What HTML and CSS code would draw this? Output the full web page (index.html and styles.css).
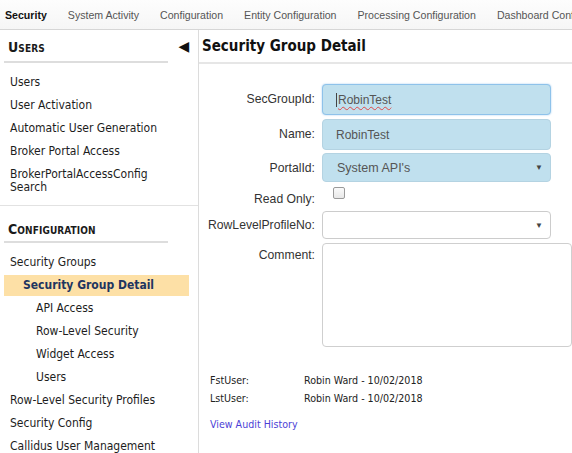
FILE: index.html
```html
<!DOCTYPE html>
<html>
<head>
<meta charset="utf-8">
<link rel="stylesheet" href="styles.css">
</head>
<body>
<nav class="topnav">
  <a class="tab active">Security</a>
  <a class="tab">System Activity</a>
  <a class="tab">Configuration</a>
  <a class="tab">Entity Configuration</a>
  <a class="tab">Processing Configuration</a>
  <a class="tab">Dashboard Configuration</a>
</nav>
<div class="layout">
  <aside class="sidebar">
    <span class="collapse">&#9664;</span>
    <section class="group">
      <h2 class="group-title">Users</h2>
      <ul class="menu">
        <li>Users</li>
        <li>User Activation</li>
        <li>Automatic User Generation</li>
        <li>Broker Portal Access</li>
        <li class="wrap">BrokerPortalAccessConfig<br>Search</li>
      </ul>
    </section>
    <section class="group last">
      <h2 class="group-title">Configuration</h2>
      <ul class="menu">
        <li>Security Groups</li>
        <li class="current">Security Group Detail</li>
        <li class="sub">API Access</li>
        <li class="sub">Row-Level Security</li>
        <li class="sub">Widget Access</li>
        <li class="sub">Users</li>
        <li>Row-Level Security Profiles</li>
        <li>Security Config</li>
        <li>Callidus User Management</li>
      </ul>
    </section>
  </aside>
  <main class="main">
    <h1 class="page-title">Security Group Detail</h1>
    <form class="form">
      <div class="row">
        <label class="label">SecGroupId:</label>
        <div class="field focus"><span class="caret-line"></span><span class="spell">RobinTest</span></div>
      </div>
      <div class="row tight">
        <label class="label">Name:</label>
        <input class="field" value="RobinTest">
      </div>
      <div class="row">
        <label class="label">PortalId:</label>
        <div class="field select"><span>System API's</span><span class="caret">&#9660;</span></div>
      </div>
      <div class="row check-row">
        <label class="label">Read Only:</label>
        <span class="checkbox"></span>
      </div>
      <div class="row select-row">
        <label class="label">RowLevelProfileNo:</label>
        <div class="field select plain"><span></span><span class="caret">&#9660;</span></div>
      </div>
      <div class="row">
        <label class="label">Comment:</label>
        <div class="textarea"></div>
      </div>
    </form>
    <div class="audit">
      <div class="audit-row"><span class="audit-key">FstUser:</span><span>Robin Ward - 10/02/2018</span></div>
      <div class="audit-row"><span class="audit-key">LstUser:</span><span>Robin Ward - 10/02/2018</span></div>
      <a class="audit-link">View Audit History</a>
    </div>
  </main>
</div>
</body>
</html>
```

FILE: styles.css
```css
* { box-sizing: border-box; }
html, body { margin: 0; padding: 0; background: #fff; overflow: hidden; }
body { width: 572px; height: 453px; font-family: "Liberation Sans", Arial, sans-serif; color: #222; }

.topnav {
  display: flex;
  height: 30px;
  align-items: center;
  border-bottom: 1px solid #d6d6d6;
  background: linear-gradient(#fdfdfd, #f6f6f6);
  white-space: nowrap;
  overflow: hidden;
  font-size: 10.6px;
  padding-left: 5px;
}
.tab { color: #555; margin-right: 21px; }
.tab.active { color: #111; font-weight: bold; }

.layout { display: flex; height: 423px; }

.sidebar {
  position: relative;
  width: 199px;
  flex: none;
  border-right: 1px solid #dcdcdc;
  font-family: "DejaVu Sans Condensed", "DejaVu Sans", sans-serif;
  font-size: 12px;
  color: #1d1d1d;
}
.collapse {
  position: absolute;
  left: 179px;
  top: 8px;
  font-size: 14px;
  color: #111;
  transform: scaleX(1.1);
}
.group { border-bottom: 1px solid #e2e2e2; padding-bottom: 6px; }
.group.last { border-bottom: none; }
.group-title {
  margin: 0 30px 0 4px;
  padding: 9px 4px 5px;
  border-bottom: 2px solid #dddddd;
  font-size: 14px;
  font-weight: bold;
  font-variant: small-caps;
  color: #1a1a1a;
  line-height: 17px;
  letter-spacing: 0.1px;
}
.group.last .group-title { padding-top: 15px; padding-bottom: 3px; }
.menu { list-style: none; margin: 0; padding: 8px 0 0; }
.menu li { padding: 0 0 0 10px; height: 23px; line-height: 23px; white-space: nowrap; }
.menu li.wrap { height: auto; line-height: 13px; padding-top: 5px; padding-bottom: 5px; }
.menu li.current {
  background: #fde0a6;
  margin: 1px 9px 1px 4px;
  padding-left: 19px;
  height: 21px;
  line-height: 21px;
  font-weight: bold;
  color: #1e3560;
}
.menu li.sub { padding-left: 36px; }
.group.last .menu { padding-top: 8px; }

.main { flex: 1; min-width: 0; position: relative; }
.page-title {
  margin: 0;
  padding: 7px 0 6px 3px;
  font-family: "DejaVu Sans Condensed", "DejaVu Sans", sans-serif;
  font-size: 15px;
  font-weight: bold;
  line-height: 19px;
  color: #111;
  border-bottom: 2px solid #e6e6e6;
}

.form { padding-top: 20px; }
.row { display: flex; align-items: flex-start; margin-bottom: 4px; }
.row.tight { margin-bottom: 3px; }
.label {
  width: 117px;
  flex: none;
  text-align: right;
  padding-right: 1px;
  font-size: 12.2px;
  color: #333;
  line-height: 30px;
  margin-right: 6px;
}
.field {
  width: 229px;
  height: 31px;
  border: 1px solid #b4d3e2;
  border-radius: 4px;
  background: #c0e0ee;
  font-family: "Liberation Sans", Arial, sans-serif;
  font-size: 12px;
  color: #555;
  padding: 0 0 0 13px;
  outline: none;
}
.field.focus {
  display: flex;
  align-items: center;
  border-color: #8ec2ea;
  box-shadow: 0 0 2px #9fcbee;
}
.caret-line { width: 1px; height: 14px; background: #444; margin-right: 1px; }
.spell { text-decoration: underline wavy #e04848; text-decoration-thickness: 1px; text-underline-offset: 2px; }
.select { display: flex; align-items: center; justify-content: space-between; height: 29px; padding-left: 14px; padding-right: 7px; font-size: 12.5px; }
.select.plain { background: #fff; border-color: #cccccc; height: 28px; }
.select-row .label { line-height: 28px; }
.caret { font-size: 8px; color: #444; }
.check-row { height: 20px; margin-bottom: 4px; }
.check-row .label { line-height: 18px; padding-top: 3px; }
.checkbox {
  width: 12px; height: 12px;
  margin: 0 0 0 11px;
  border: 1px solid #9a9a9a;
  border-radius: 2px;
  background: linear-gradient(#fafafa, #e8e8e8);
}
.row:last-child .label { line-height: 24px; }
.textarea {
  width: 300px;
  height: 104px;
  border: 1px solid #cfcfcf;
  border-radius: 4px;
  background: #fff;
}

.audit {
  padding: 20px 0 0 11px;
  font-family: "DejaVu Sans Condensed", "DejaVu Sans", sans-serif;
  font-size: 10.6px;
  color: #222;
}
.audit-row { display: flex; height: 18px; line-height: 18px; }
.audit-key { width: 94px; }
.audit-link { display: block; margin-top: 8px; color: #4d3fd6; line-height: 18px; }
```
